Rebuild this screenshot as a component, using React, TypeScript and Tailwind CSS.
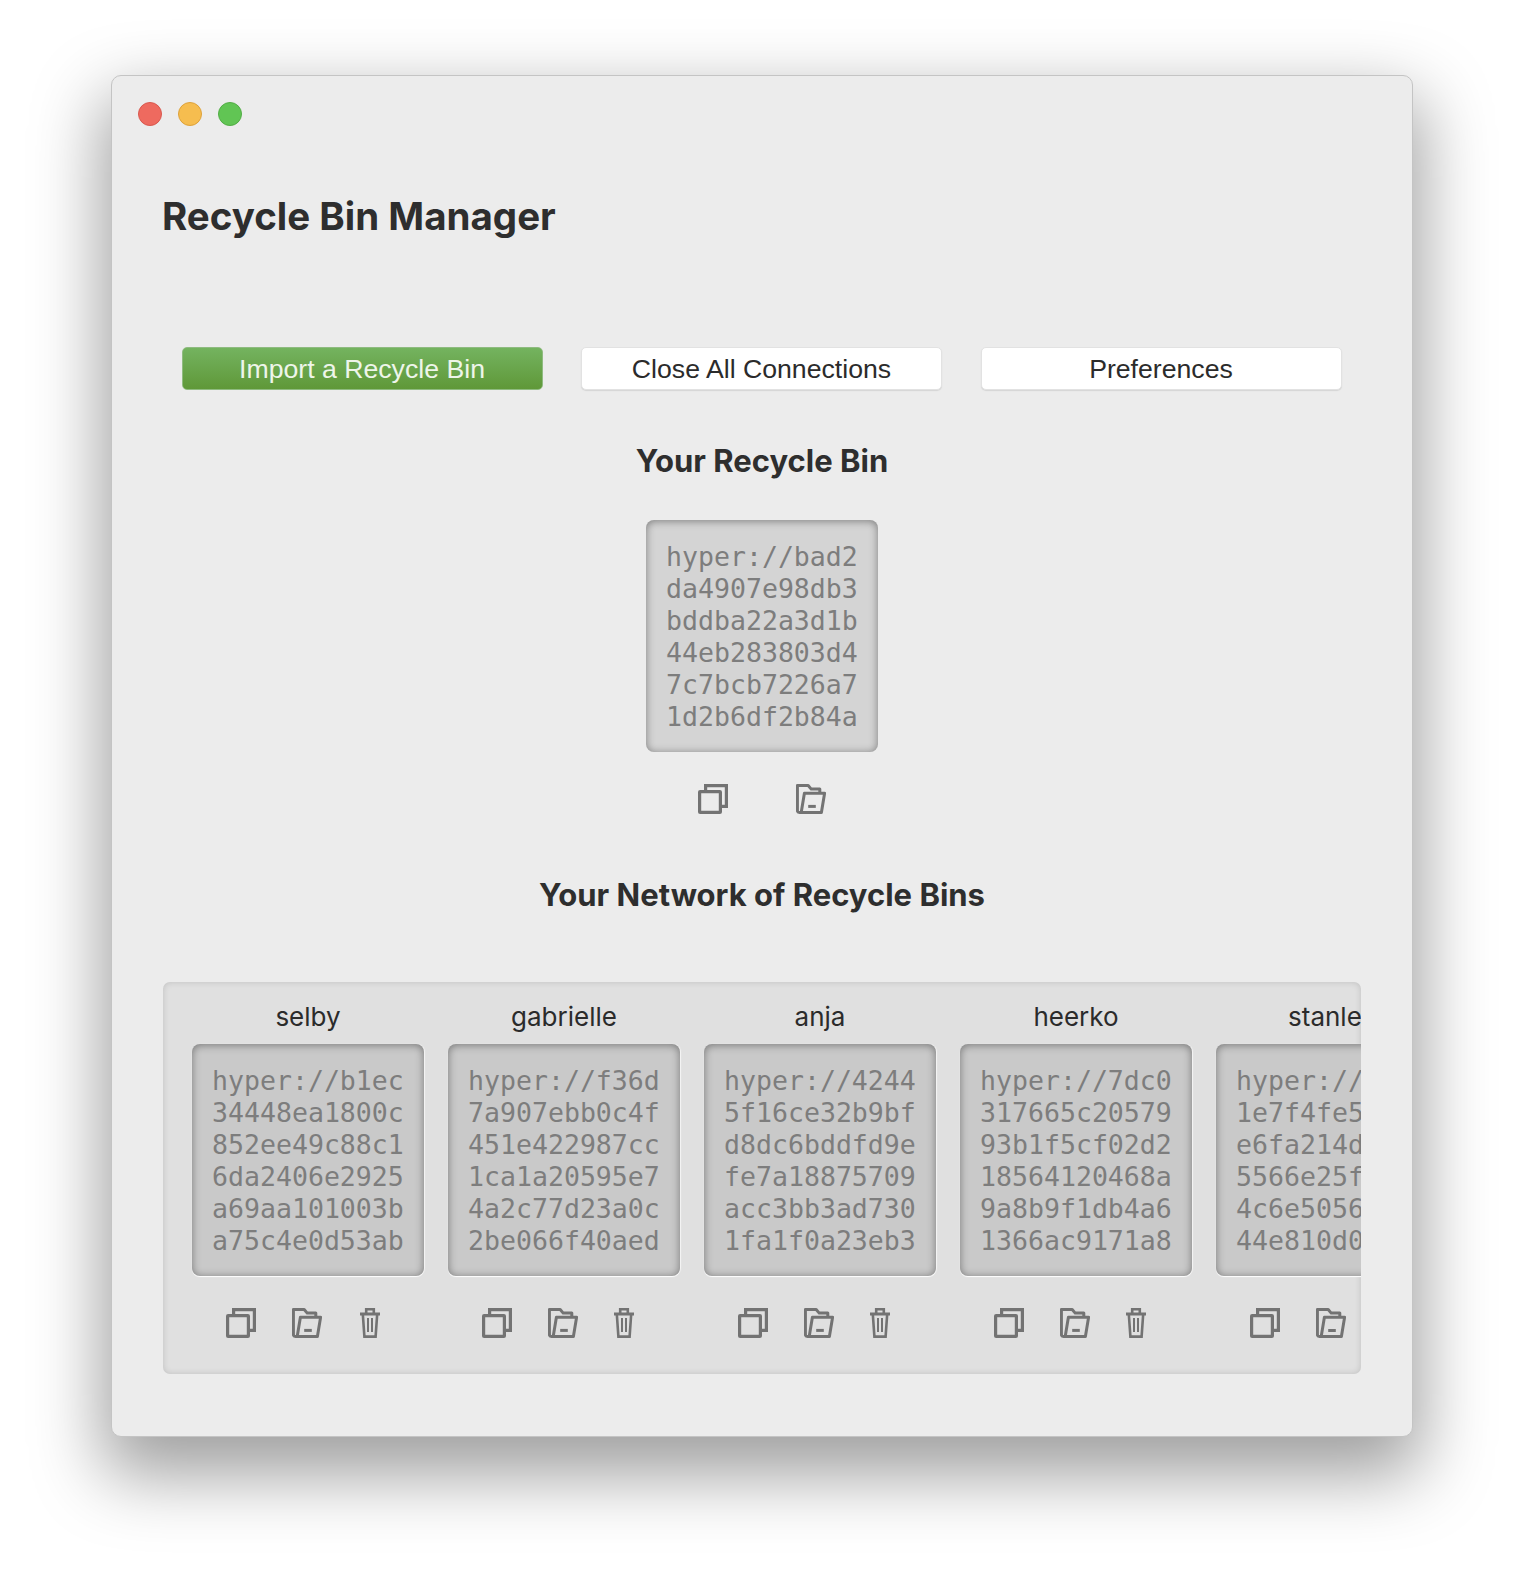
import React from "react";

const CopyIcon = () => (
  <svg width="30" height="30" viewBox="0 0 30 30" fill="none" stroke="#737373" strokeWidth="3.2" className="shrink-0">
    <rect x="1.6" y="7.6" width="20.8" height="20.8" rx="0.5" />
    <path d="M7.6 7V1.6h20.8v20.8H23" />
  </svg>
);

const FolderIcon = () => (
  <svg width="30" height="30" viewBox="0 0 30 30" fill="none" stroke="#737373" strokeWidth="3" strokeLinejoin="round" className="shrink-0">
    <path d="M5.4 28.5H3.4c-1.1 0-2-.9-2-2V1.5h10.8l3 3.6h8.6v4" />
    <path d="M8.4 9.2h20.2l-3.2 19.3H5.2z" />
    <path d="M12.2 22.4h7.6" />
  </svg>
);

const TrashIcon = () => (
  <svg width="20" height="30" viewBox="0 0 20 30" fill="none" stroke="#737373" strokeWidth="2.6" className="shrink-0">
    <path d="M0 6h20" strokeWidth="3" />
    <path d="M6.2 5V1.3h7.6V5" />
    <path d="M2.8 6l1.6 22.6h11.2L17.2 6" />
    <path d="M8 10v14M12 10v14" strokeWidth="2" />
  </svg>
);

const HashBox = ({ hash, dark }: { hash: string; dark?: boolean }) => (
  <div
    className={
      dark
        ? "w-[232px] h-[232px] shrink-0 rounded-[8px] bg-[#c9c9c9] px-5 pt-[21px] shadow-[inset_0_1px_8px_rgba(0,0,0,0.42),0_1px_1px_#ffffff,1px_0_1px_#f4f4f4]"
        : "w-[232px] h-[232px] shrink-0 rounded-[8px] bg-[#d4d4d4] px-5 pt-[21px] shadow-[inset_0_1px_8px_rgba(0,0,0,0.42)]"
    }
  >
    <div className="font-['DejaVu_Sans_Mono',monospace] text-[26.55px] leading-[32px] text-[#7d7d7d] break-all">
      {hash}
    </div>
  </div>
);

const bins = [
  { name: "selby", hash: "hyper://b1ec34448ea1800c852ee49c88c16da2406e2925a69aa101003ba75c4e0d53ab" },
  { name: "gabrielle", hash: "hyper://f36d7a907ebb0c4f451e422987cc1ca1a20595e74a2c77d23a0c2be066f40aed" },
  { name: "anja", hash: "hyper://42445f16ce32b9bfd8dc6bddfd9efe7a18875709acc3bb3ad7301fa1f0a23eb3" },
  { name: "heerko", hash: "hyper://7dc0317665c2057993b1f5cf02d218564120468a9a8b9f1db4a61366ac9171a8" },
  { name: "stanley", hash: "hyper://00001e7f4fe50000e6fa214d00005566e25f00004c6e5056000044e810d00000" },
];

const Button = ({ label, green }: { label: string; green?: boolean }) => (
  <button
    className={
      green
        ? "w-[361px] h-[43px] rounded-[5px] border border-[#8fbb80] bg-gradient-to-b from-[#74b35f] to-[#5f9838] text-[#eef5ea] text-[26.67px] font-['Liberation_Sans',sans-serif]"
        : "w-[361px] h-[43px] rounded-[5px] border border-[#e2e2e2] bg-white text-[#2b2b2b] text-[26.67px] font-['Liberation_Sans',sans-serif] shadow-[0_1px_1px_#d5d5d5]"
    }
  >
    {label}
  </button>
);

export default function App() {
  return (
    <div className="min-h-[1584px] bg-white pt-[75px] pl-[111px] overflow-hidden">
      <div className="w-[1302px] h-[1362px] rounded-[10px] border border-[#c4c4c4] bg-[#ececec] shadow-[0_30px_70px_8px_rgba(0,0,0,0.38)] font-['Inter',sans-serif]">
        <div className="flex gap-4 pl-[26px] pt-[26px]">
          <div className="w-6 h-6 rounded-full bg-[#ee6a5f] border border-[#d9584e]" />
          <div className="w-6 h-6 rounded-full bg-[#f6bd4f] border border-[#dea23a]" />
          <div className="w-6 h-6 rounded-full bg-[#61c554] border border-[#52ad45]" />
        </div>

        <h1 className="pl-[50px] mt-[65px] text-[38.5px] leading-[50px] font-bold text-[#2e2e2e]">Recycle Bin Manager</h1>

        <div className="flex gap-[38.5px] pl-[69.5px] mt-[106px]">
          <Button label="Import a Recycle Bin" green />
          <Button label="Close All Connections" />
          <Button label="Preferences" />
        </div>

        <h2 className="mt-[51px] text-center text-[31px] leading-[40px] font-bold text-[#2e2e2e]">Your Recycle Bin</h2>

        <div className="flex justify-center mt-[39px]">
          <HashBox hash="hyper://bad2da4907e98db3bddba22a3d1b44eb283803d47c7bcb7226a71d2b6df2b84a" />
        </div>
        <div className="flex justify-center gap-[68px] mt-8">
          <CopyIcon />
          <FolderIcon />
        </div>

        <h2 className="mt-[61px] text-center text-[31px] leading-[40px] font-bold text-[#2e2e2e]">Your Network of Recycle Bins</h2>

        <div className="ml-[51px] mt-[67px] w-[1198px] h-[392px] rounded-[7px] bg-[#e0e0e0] shadow-[inset_0_0_6px_rgba(0,0,0,0.15)] overflow-hidden">
          <div className="flex gap-6 pl-[29px] pt-[19px]">
            {bins.map((b, i) => (
              <div key={b.name} className="w-[232px] shrink-0">
                <div className="text-center text-[26px] leading-[32px] text-[#2b2b2b] whitespace-nowrap">{b.name}</div>
                <div className="mt-[11px]">
                  <HashBox hash={b.hash} dark />
                </div>
                <div className="flex items-center mt-8 pl-[34px]">
                  <CopyIcon />
                  <div className="ml-9">
                    <FolderIcon />
                  </div>
                  <div className={i === 0 ? "ml-[38px]" : "ml-9"}>
                    <TrashIcon />
                  </div>
                </div>
              </div>
            ))}
          </div>
        </div>
      </div>
    </div>
  );
}
